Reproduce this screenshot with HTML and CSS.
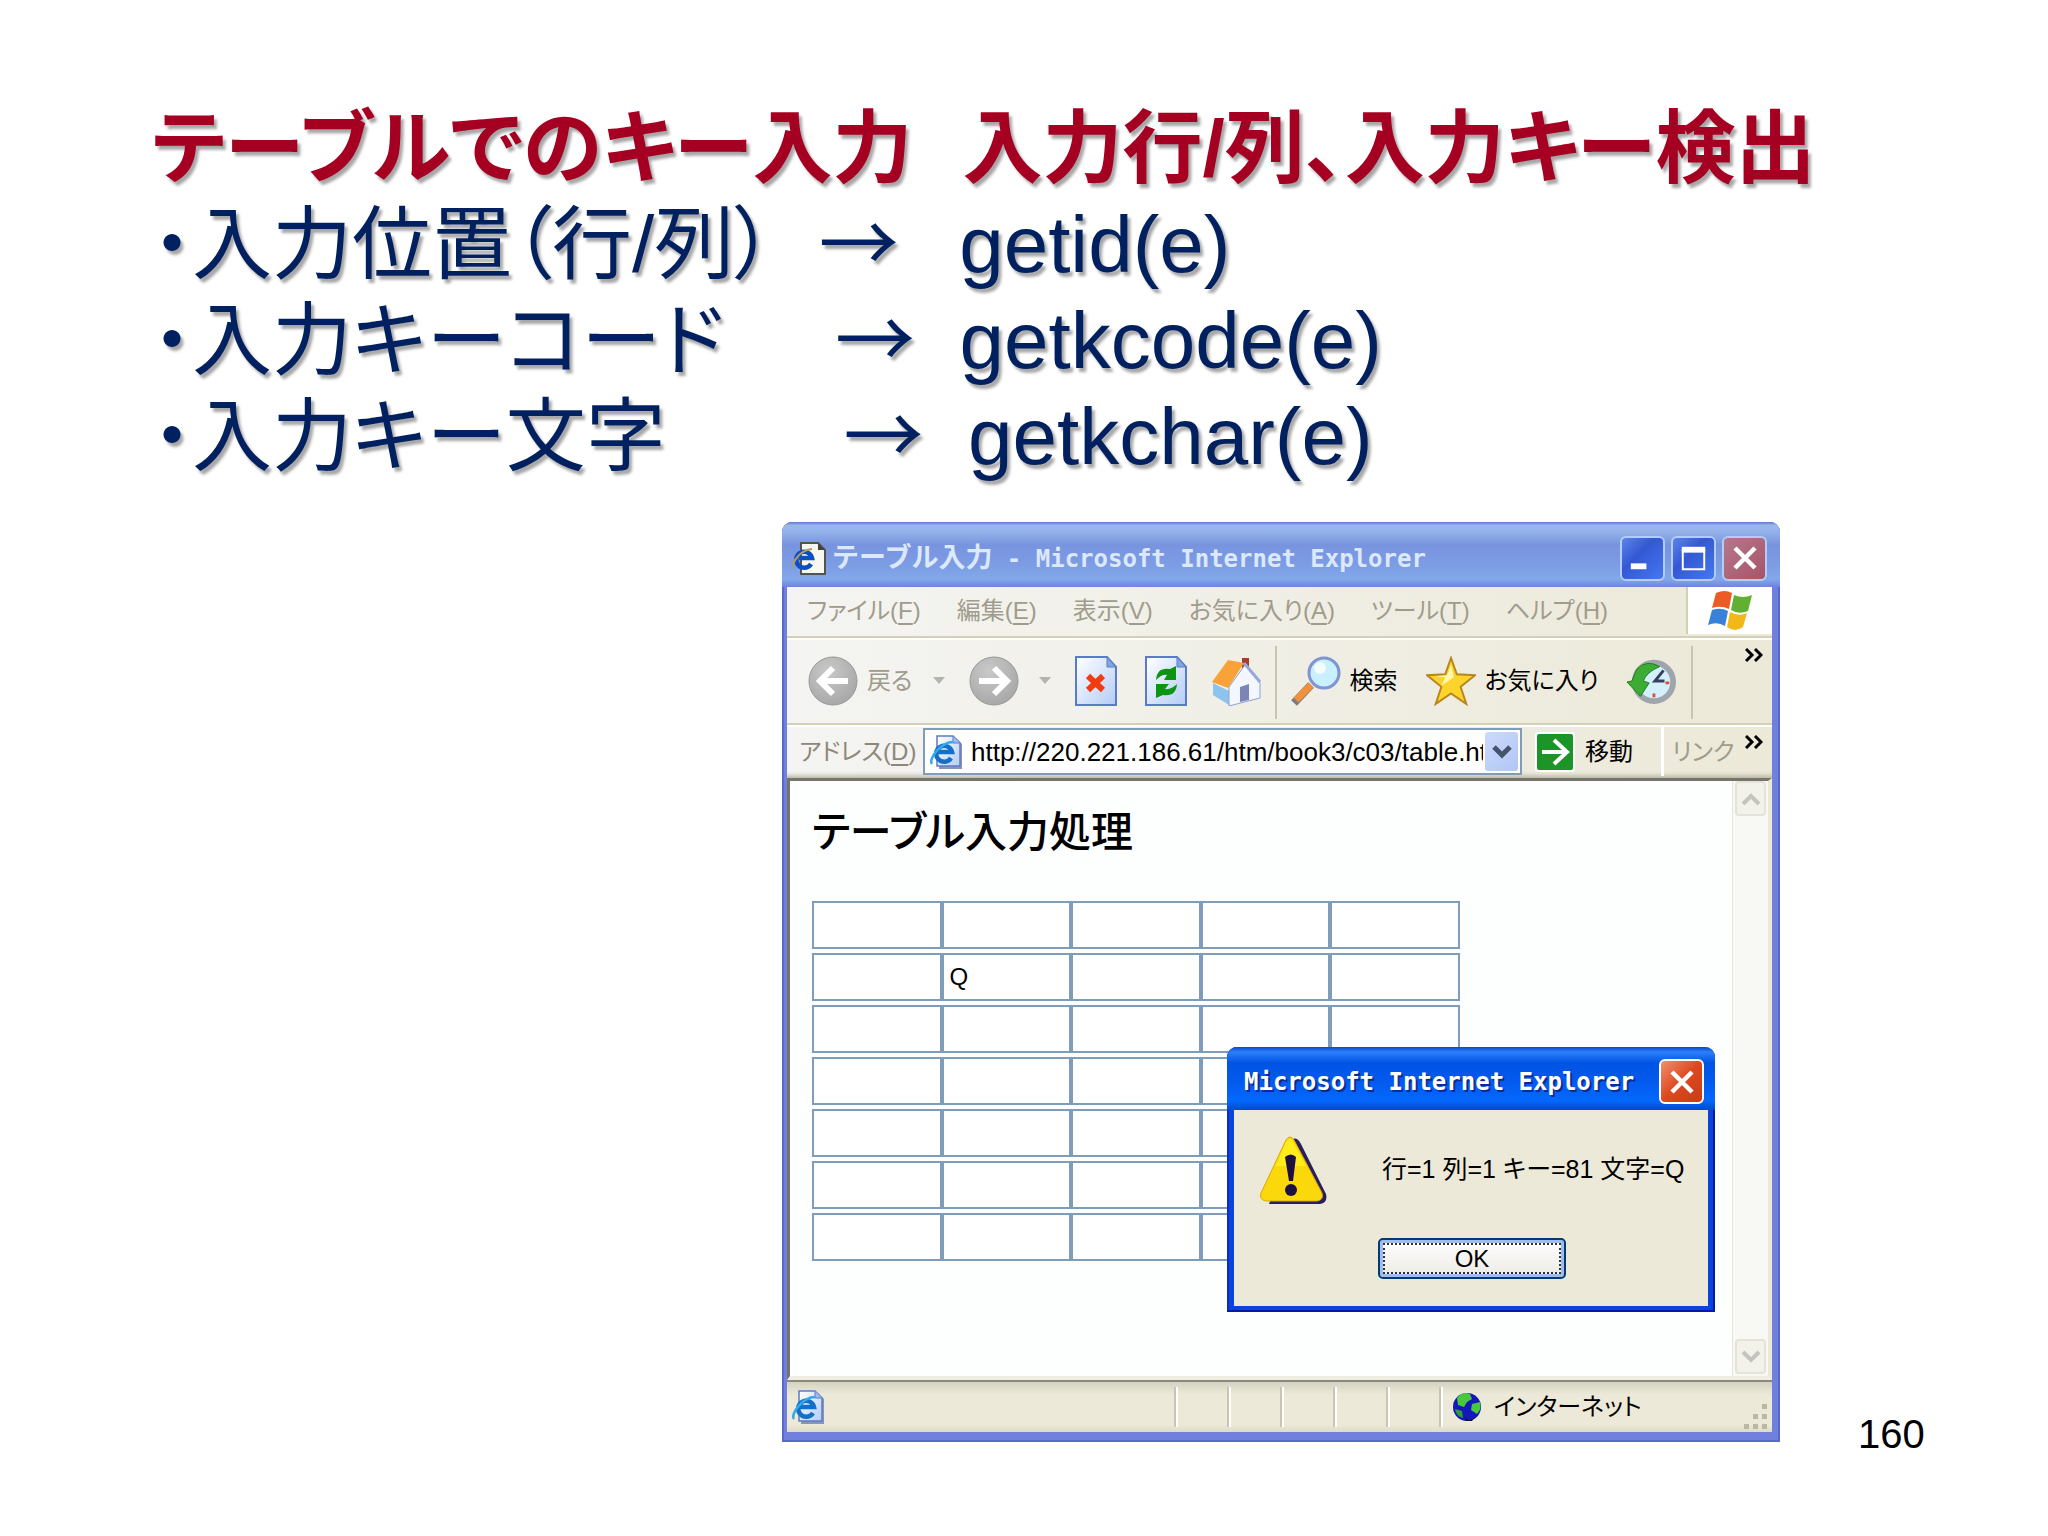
FILE: index.html
```html
<!DOCTYPE html>
<html lang="ja">
<head>
    <meta charset="UTF-8">
    <meta name="viewport" content="width=device-width, initial-scale=1.0">
    <title>テーブルでのキー入力</title>
    <link rel="stylesheet" href="styles.css">
</head>
<body>

    <!-- Shared icons -->
    <svg class="defs" aria-hidden="true">
        <defs>
            <linearGradient id="paper" x1="0" y1="0" x2="1" y2="1">
                <stop offset="0" stop-color="#ffffff"/>
                <stop offset="1" stop-color="#b4ccf6"/>
            </linearGradient>
            <radialGradient id="grey" cx=".4" cy=".3" r=".8">
                <stop offset="0" stop-color="#c9c9c9"/>
                <stop offset="1" stop-color="#a4a4a4"/>
            </radialGradient>
            <symbol id="ie" viewBox="0 0 34 34">
                <path d="M8 1h17l6 6v25H8z" fill="#8a93b8" transform="translate(2 2)"/>
                <path d="M8 1h16l7 7v23H8z" fill="url(#paper)" stroke="#5c7cc4" stroke-width="1.5"/>
                <path d="M24 1v7h7" fill="#9dbcf0" stroke="#5c7cc4"/>
                <path d="M22 23a8 8 0 1 1 1-6H9" fill="none" stroke="#1270c8" stroke-width="4.5"/>
                <path d="M3 29C-1 24 12 7 24 7" fill="none" stroke="#35a8ea" stroke-width="2.5"/>
            </symbol>
            <symbol id="more" viewBox="0 0 18 14">
                <path d="M1 1l6 6-6 6M10 1l6 6-6 6" fill="none" stroke="#000" stroke-width="3"/>
            </symbol>
            <symbol id="cross" viewBox="0 0 26 26">
                <path d="M3 3l20 20M23 3L3 23" stroke="#fff" stroke-width="4.5"/>
            </symbol>
        </defs>
    </svg>

    <main class="slide">
        <header class="text">
            <h1>テーブルでのキー入力<span class="sub">入力行/列、入力キー検出</span></h1>
            <ul>
                <li>・入力位置（行/列）  <span class="arrow">→</span>  &thinsp;getid(e)</li>
                <li>・入力キーコード     <span class="arrow">→</span>  getkcode(e)</li>
                <li>・入力キー文字        <span class="arrow">→</span>  getkchar(e)</li>
            </ul>
        </header>

        <section class="window">
            <div class="titlebar">
                <svg class="ie-icon" viewBox="0 0 34 34">
                    <path d="M9 2h17l7 7v24H9z" fill="#f8f8f0" stroke="#55544c" stroke-width="2"/>
                    <path d="M26 2v7h7z" fill="#44433c"/>
                    <path d="M19 23a8 8 0 1 1 1-6H7" fill="none" stroke="#0b4fc4" stroke-width="4.5"/>
                    <path d="M2 27C-1 22 8 9 20 8" fill="none" stroke="#b89a5c" stroke-width="2"/>
                </svg>
                <span class="caption"><span class="ja">テーブル入力</span> - Microsoft Internet Explorer</span>
                <button class="tb-btn" aria-label="最小化"><svg viewBox="0 0 42 42"><path d="M9 29h16" stroke="#fff" stroke-width="6"/></svg></button>
                <button class="tb-btn" aria-label="最大化"><svg viewBox="0 0 42 42"><path d="M10 12h22v20H10z" fill="none" stroke="#fff" stroke-width="2"/><path d="M9 12h24" stroke="#fff" stroke-width="6"/></svg></button>
                <button class="tb-btn close" aria-label="閉じる"><svg class="x"><use href="#cross"/></svg></button>
            </div>

            <nav class="menubar">
                <button>ファイル(<u>F</u>)</button>
                <button>編集(<u>E</u>)</button>
                <button>表示(<u>V</u>)</button>
                <button>お気に入り(<u>A</u>)</button>
                <button>ツール(<u>T</u>)</button>
                <button>ヘルプ(<u>H</u>)</button>
                <span class="flag">
                    <svg viewBox="0 0 46 42">
                        <path d="M9 3q9-4 16 0l-3 16q-8-4-17-1z" fill="#ec5a26"/>
                        <path d="M27 5q9 4 18 0l-4 16q-9 4-17-1z" fill="#62b032"/>
                        <path d="M5 20q9-3 16 1l-3 15q-8-5-17-1z" fill="#3a82d8"/>
                        <path d="M23 22q9 5 17 1l-4 14q-8 6-16 0z" fill="#f2b818"/>
                    </svg>
                </span>
            </nav>

            <div class="toolbar">
                <button class="tool back off">
                    <svg class="icon" viewBox="0 0 50 50"><circle cx="25" cy="25" r="24" fill="url(#grey)" stroke="#999"/><path d="M40 25H13M25 12L12 25l13 13" fill="none" stroke="#fff" stroke-width="6"/></svg>
                    戻る
                </button>
                <svg class="caret" viewBox="0 0 12 8"><path d="M0 0h12L6 7z" fill="#b4b4ac"/></svg>
                <button class="tool fwd" aria-label="進む">
                    <svg class="icon" viewBox="0 0 50 50"><circle cx="25" cy="25" r="24" fill="url(#grey)" stroke="#999"/><path d="M10 25h27M25 12l13 13-13 13" fill="none" stroke="#fff" stroke-width="6"/></svg>
                </button>
                <svg class="caret" viewBox="0 0 12 8"><path d="M0 0h12L6 7z" fill="#b4b4ac"/></svg>
                <button class="tool doc" aria-label="中止">
                    <svg class="icon" viewBox="0 0 42 50"><path d="M1 1h31l9 10v38H1z" fill="url(#paper)" stroke="#5a7cc8" stroke-width="2"/><path d="M32 1v10h9z" fill="#7ea6e0" stroke="#5a7cc8"/><path d="M13 20l15 14M28 20L13 34" stroke="#f03c10" stroke-width="6"/></svg>
                </button>
                <button class="tool doc" aria-label="更新">
                    <svg class="icon" viewBox="0 0 42 50"><path d="M1 1h31l9 10v38H1z" fill="url(#paper)" stroke="#5a7cc8" stroke-width="2"/><path d="M32 1v10h9z" fill="#7ea6e0" stroke="#5a7cc8"/><path d="M11 24q1-13 14-11l6-3v14H19l3-5q-5-1-11 5z" fill="#0c9412"/><path d="M32 28q-1 13-14 11l-7 3V28h13l-4 5q6 1 12-5z" fill="#0c9412"/></svg>
                </button>
                <button class="tool home" aria-label="ホーム">
                    <svg class="icon" viewBox="0 0 50 50">
                        <path d="M31 2h7v14h-7z" fill="#a83c2c"/>
                        <path d="M2 27l16 8v14L2 39z" fill="#8cc4ee"/>
                        <path d="M18 31L34 9l15 18v15L18 50z" fill="#f4f7ff" stroke="#8ea0d8"/>
                        <path d="M1 26L17 4l16 3-16 25z" fill="#f8a238"/>
                        <path d="M33 7l16 19" stroke="#98a8dc" stroke-width="3"/>
                        <path d="M29 31l9-3v16l-9 2z" fill="#7c86b4"/>
                    </svg>
                </button>
                <span class="sep"></span>
                <button class="tool search">
                    <svg class="icon" viewBox="0 0 50 50"><path d="M3 47l17-18" stroke="#7a7a88" stroke-width="8"/><path d="M5 44l15-15" stroke="#f09038" stroke-width="7"/><circle cx="33" cy="17" r="15" fill="#c8f0ff" stroke="#8094d4" stroke-width="3"/><circle cx="29" cy="12" r="6" fill="#fff" opacity=".8"/></svg>
                    検索
                </button>
                <button class="tool fav">
                    <svg class="icon" viewBox="0 0 52 50"><path d="M26 1l6 17 19 1-15 12 6 18-16-11-16 11 6-18L1 19l19-1z" fill="#fcd42c" stroke="#b8861c" stroke-width="2"/><path d="M26 8l3 13-13 9 4-9-11-1 13-1z" fill="#fff6b0"/></svg>
                    お気に入り
                </button>
                <button class="tool history" aria-label="履歴">
                    <svg class="icon" viewBox="0 0 52 50"><circle cx="28" cy="26" r="20" fill="#d4f0fc" stroke="#a0a4ac" stroke-width="6"/><path d="M44 27h-4M28 42v-4" stroke="#e84c30" stroke-width="3"/><path d="M38 14L29 25h10" fill="none" stroke="#34405c" stroke-width="3"/><path d="M34 10Q20 2 10 13L5 25l-5 1 14 15 9-14-6-2q3-9 17-15z" fill="#3cac34" stroke="#1c7c1c"/></svg>
                </button>
                <span class="sep last"></span>
                <button class="more" aria-label="その他"><svg><use href="#more"/></svg></button>
            </div>

            <form class="addressbar">
                <label for="address">アドレス(<u>D</u>)</label>
                <div class="combo">
                    <svg class="ie-icon"><use href="#ie"/></svg>
                    <input type="text" id="address" value="http://220.221.186.61/htm/book3/c03/table.htm">
                    <button type="button" class="drop" aria-label="履歴を開く"><svg viewBox="0 0 20 14"><path d="M2 2l8 8 8-8" fill="none" stroke="#44546c" stroke-width="5"/></svg></button>
                </div>
                <button type="button" class="go">
                    <svg viewBox="0 0 40 40"><rect width="40" height="40" rx="3" fill="#fff"/><rect x="2" y="2" width="36" height="36" rx="2" fill="#1c9428"/><path d="M7 20h23M19 8l13 12-13 12" fill="none" stroke="#fff" stroke-width="4"/></svg>
                    移動
                </button>
                <span class="links">リンク</span>
                <button type="button" class="more" aria-label="その他のリンク"><svg><use href="#more"/></svg></button>
            </form>

            <div class="view">
                <div class="page">
                    <h2>テーブル入力処理</h2>
                    <table id="grid"></table>
                </div>
                <div class="scroll">
                    <button aria-label="上へ"><svg viewBox="0 0 20 14"><path d="M2 12l8-8 8 8" fill="none" stroke="#c4c4be" stroke-width="4"/></svg></button>
                    <button aria-label="下へ"><svg viewBox="0 0 20 14"><path d="M2 2l8 8 8-8" fill="none" stroke="#c4c4be" stroke-width="4"/></svg></button>
                </div>
            </div>

            <footer class="statusbar">
                <svg class="ie-icon"><use href="#ie"/></svg>
                <span class="pane first"></span>
                <span class="pane"></span>
                <span class="pane"></span>
                <span class="pane"></span>
                <span class="pane"></span>
                <span class="zone">
                    <svg viewBox="0 0 30 30"><circle cx="15" cy="15" r="14" fill="#1418b8"/><path d="M5 6q6-7 13-4l2 5-5 3-3 5-6-2z" fill="#48c83c"/><path d="M20 12l8-2q2 7-3 12l-6-4z" fill="#48c83c"/><path d="M3 17l7 2 1 7q-7-2-8-9z" fill="#2ca030"/><path d="M12 26q6 4 10 0l-2 3h-6z" fill="#101030"/></svg>
                    インターネット
                </span>
                <svg class="grip" viewBox="0 0 24 26"><path d="M18 0h5v5h-5zM18 10h5v5h-5zM18 20h5v5h-5zM9 10h5v5H9zM9 20h5v5H9zM0 20h5v5H0z" fill="#bab7a4"/></svg>
            </footer>

            <!-- Alert over the page -->
            <div class="dialog" role="alertdialog" aria-labelledby="dlgTitle" aria-describedby="dlgText">
                <div class="titlebar">
                    <span class="caption" id="dlgTitle">Microsoft Internet Explorer</span>
                    <button class="tb-btn close" aria-label="閉じる"><svg class="x"><use href="#cross"/></svg></button>
                </div>
                <div class="dialog-body">
                    <svg class="warn" viewBox="0 0 68 68">
                        <path d="M33 3q4-2 8 5l25 50q2 9-6 10H9z" fill="#28205c"/>
                        <path d="M26 4q4-6 8 0l28 53q2 7-5 8H6q-7-1-5-8z" fill="#fbd80c" stroke="#d8a808"/>
                        <path d="M26 6q4-6 7 0l13 24H16z" fill="#fff31c" opacity=".8"/>
                        <path d="M25 21q6-5 11 0l-3 24h-4z" fill="#1c1040"/>
                        <circle cx="31" cy="54" r="6" fill="#1c1040"/>
                    </svg>
                    <p id="dlgText">行=1 列=1 キー=81 文字=Q</p>
                    <button class="ok">OK</button>
                </div>
            </div>
        </section>

        <span class="pageno">160</span>
    </main>

    <script>
        // 7 x 5 table of input cells
        const ROWS = 7;
        const COLS = 5;
        const grid = document.getElementById('grid');

        for (let r = 0; r < ROWS; r++) {
            const row = grid.insertRow();
            for (let c = 0; c < COLS; c++) {
                const input = document.createElement('input');
                input.type = 'text';
                input.setAttribute('aria-label', `行${r} 列${c}`);
                if (r === 1 && c === 1) {
                    input.value = 'Q';
                }
                row.insertCell().appendChild(input);
            }
        }
    </script>

</body>
</html>
```
FILE: styles.css
```css
* {
    box-sizing: border-box;
}
body {
    margin: 0;
    background: #fff;
    font-family: "Liberation Sans", "Noto Sans CJK JP", sans-serif;
    font-feature-settings: "palt";
}
button, input {
    font: inherit;
    font-feature-settings: inherit;
    color: inherit;
    margin: 0;
    padding: 0;
    border: 0;
    background: none;
}
svg {
    display: block;
    flex: none;
}
.defs {
    position: absolute;
    width: 0;
    height: 0;
}

/* Slide */
.slide {
    min-height: 100vh;
    display: grid;
    grid-template-columns: 782fr 998fr 268fr;
    grid-template-rows: auto 1fr;
    padding-bottom: 94px;
    row-gap: 37px;
}
.text {
    grid-column: 1 / -1;
    padding: 101px 0 0 152px;
    font-size: 80px;
    line-height: 96px;
    white-space: nowrap;
    color: #00205f;
    text-shadow: 3px 4px 3px rgba(0, 0, 0, 0.35);
}
.text h1 {
    margin: 0;
    font-size: 80px;
    line-height: 96px;
    color: #a50021;
}
.sub {
    margin-left: 50px;
}
.text ul {
    margin: 0;
    padding: 0;
    list-style: none;
}
.text li {
    height: 96px;
    white-space: pre;
}
.arrow {
    font-family: "Noto Sans CJK JP", sans-serif;
    line-height: 0;
}
.pageno {
    grid-column: 3;
    align-self: end;
    padding-left: 78px;
    margin-bottom: -16px;
    font-size: 40px;
    line-height: 48px;
    color: #000;
}

/* Browser window */
.window {
    grid-column: 2;
    position: relative;
    display: flex;
    flex-direction: column;
    padding: 0 8px 10px 5px;
    border-radius: 10px 10px 0 0;
    background: #7080dc;
    box-shadow: inset 0 0 0 2px #5a68cc;
    font-size: 24px;
    line-height: 32px;
}
.titlebar {
    display: flex;
    align-items: center;
    gap: 6px;
    height: 65px;
    margin: 0 -8px 0 -5px;
    padding: 7px 13px 0 10px;
    border-radius: 10px 10px 0 0;
    background: linear-gradient(#6074d0 0, #9ab6ee 5%, #94b2ea 15%, #7894de 35%, #7c9ce4 65%, #82a8ea 88%, #6f84dc 100%);
    color: #dce8fc;
}
.caption {
    flex: 1;
    font: bold 24px/32px "DejaVu Sans Mono", "Noto Sans CJK JP", monospace;
    white-space: nowrap;
}
.ja {
    font-size: 27px;
}
.ie-icon {
    width: 34px;
    height: 34px;
}
.tb-btn {
    display: flex;
    align-items: center;
    justify-content: center;
    width: 45px;
    height: 45px;
    border: 2px solid #b4ccf8;
    border-radius: 6px;
    background: linear-gradient(135deg, #5c84ea, #3458d4 40%, #4478f0);
}
.tb-btn svg {
    width: 41px;
    height: 41px;
}
.tb-btn .x {
    width: 26px;
    height: 26px;
}
.close {
    background: linear-gradient(135deg, #b4788c, #a85468);
}
.menubar {
    display: flex;
    align-items: center;
    gap: 36px;
    height: 51px;
    padding: 0 0 2px 20px;
    border-bottom: 2px solid #d4d0b8;
    background: linear-gradient(90deg, #f4f4f2, #ece9d8);
    color: #a09c8c;
}
.menubar button {
    white-space: nowrap;
}
u {
    text-underline-offset: 4px;
}
.flag {
    display: flex;
    align-items: center;
    justify-content: center;
    align-self: stretch;
    width: 86px;
    margin-left: auto;
    border-left: 2px solid #d4d0b8;
    background: #fff;
}
.flag svg {
    width: 46px;
    height: 42px;
}
.toolbar {
    display: flex;
    align-items: center;
    height: 87px;
    padding: 0 9px 2px 21px;
    border-top: 2px solid #fff;
    border-bottom: 2px solid #d4d0b8;
    background: linear-gradient(90deg, #f4f4f2, #ece9d8);
    color: #000;
}
.tool {
    display: flex;
    align-items: center;
    gap: 9px;
    white-space: nowrap;
}
.off {
    color: #a09c8c;
}
.icon {
    width: 50px;
    height: 50px;
}
.doc .icon {
    width: 42px;
}
.caret {
    width: 12px;
    height: 8px;
    margin: 0 24px 0 20px;
}
.doc {
    margin-right: 28px;
}
.home {
    margin-left: -4px;
}
.sep {
    align-self: stretch;
    width: 2px;
    margin: 6px 14px 2px;
    background: #c8c5b0;
}
.fav {
    margin-left: 28px;
}
.history {
    margin-left: 28px;
}
.last {
    margin-right: auto;
}
.more {
    align-self: flex-start;
    margin-top: 8px;
}
.more svg {
    width: 18px;
    height: 14px;
}
.addressbar {
    display: flex;
    align-items: center;
    height: 53px;
    padding: 0 9px 2px 12px;
    border-top: 2px solid #fff;
    background: linear-gradient(90deg, #f4f4f2, #ece9d8);
    box-shadow: inset 0 -6px 5px -4px #b0ad9c;
}
.addressbar label {
    width: 124px;
    color: #8c887c;
    white-space: nowrap;
}
.combo {
    flex: 1;
    min-width: 0;
    display: flex;
    align-items: center;
    gap: 8px;
    height: 47px;
    padding: 2px 2px 2px 4px;
    border: 2px solid #7f9db9;
    background: #fff;
}
.combo input {
    flex: 1;
    min-width: 0;
    outline: none;
    font-size: 26px;
    color: #000;
}
.drop {
    display: flex;
    align-items: center;
    justify-content: center;
    width: 33px;
    height: 39px;
    margin-left: -6px;
    border-radius: 3px;
    background: linear-gradient(135deg, #ccdafc, #b0c6f6);
}
.drop svg, .scroll svg {
    width: 20px;
    height: 14px;
}
.go {
    display: flex;
    align-items: center;
    gap: 10px;
    margin: 0 28px 0 13px;
    color: #000;
    white-space: nowrap;
}
.go svg {
    width: 40px;
    height: 40px;
}
.links {
    display: flex;
    align-items: center;
    align-self: stretch;
    width: 84px;
    padding-left: 8px;
    border-left: 3px solid #fff;
    color: #a09c8c;
    white-space: nowrap;
}

/* Page view */
.view {
    flex: 1;
    min-height: 600px;
    display: flex;
    border: 3px solid #77746a;
    border-right: 4px solid #ece9d8;
    border-bottom: 4px solid #f0eee2;
    background: #fdfefe;
}
.page {
    flex: 1;
    padding: 28px 22px;
    color: #000;
}
.page h2 {
    margin: 0 0 40px;
    font-size: 42px;
    line-height: 48px;
    font-weight: 500;
}
#grid {
    width: 648px;
    border-spacing: 0 4px;
}
#grid td {
    padding: 0;
}
#grid input {
    display: block;
    width: 100%;
    height: 48px;
    padding: 0 6px;
    border: 2px solid #7f9db9;
    background: #fff;
}
.scroll {
    display: flex;
    flex-direction: column;
    justify-content: space-between;
    width: 36px;
    padding: 0 2px 2px;
    background: #f8f8f5;
    border-left: 1px solid #e8e6dc;
}
.scroll button {
    display: flex;
    align-items: center;
    justify-content: center;
    height: 35px;
    border: 2px solid #e4e3da;
    border-radius: 4px;
    background: #f2f1ea;
}

/* Status bar */
.statusbar {
    display: flex;
    align-items: center;
    height: 52px;
    padding-left: 4px;
    border-top: 2px solid #8c897c;
    background: linear-gradient(#d4d2c2, #ece9d8 25%, #ece9d8 85%, #dedbc8);
    color: #000;
}
.pane, .zone {
    width: 53px;
    height: 40px;
    border-left: 2px solid #c8c5b2;
    box-shadow: inset 2px 0 0 #fff;
}
.first {
    margin-left: auto;
}
.statusbar .zone {
    display: flex;
    align-items: center;
    gap: 12px;
    width: 305px;
    padding-left: 11px;
}
.zone svg {
    width: 30px;
    height: 30px;
}
.grip {
    align-self: flex-end;
    width: 24px;
    height: 26px;
    margin: 0 4px 2px 0;
}

/* Alert dialog */
.dialog {
    position: absolute;
    right: 65px;
    bottom: 130px;
    width: 488px;
    padding: 0 7px 6px;
    border-radius: 10px 10px 0 0;
    background: #0a44dc;
    box-shadow: inset -2px -2px 0 #001ca0, inset 2px 0 0 #0830c0;
    color: #000;
}
.dialog .titlebar {
    height: 63px;
    margin: 0 -7px;
    padding: 6px 11px 0 17px;
    background: linear-gradient(#0848c8 0, #2c80fc 8%, #0054e4 25%, #0458ec 50%, #0468fc 85%, #0048d0 100%);
    color: #fff;
    text-shadow: 2px 2px 0 #0a2c90;
}
.dialog .tb-btn {
    border-color: #fff;
    background: linear-gradient(135deg, #f09070, #dc4820 50%, #c83c18);
}
.dialog-body {
    display: grid;
    grid-template-columns: 118px 1fr;
    padding: 26px 26px 27px;
    row-gap: 34px;
    background: #ece9d8;
}
.warn {
    width: 68px;
    height: 68px;
}
.dialog-body p {
    margin: 0;
    padding: 17px 0 0 4px;
    font-size: 25px;
    white-space: nowrap;
}
.ok {
    grid-column: 2;
    width: 188px;
    height: 41px;
    border: 2px solid #003c74;
    border-radius: 5px;
    outline: 2px dotted #333;
    outline-offset: -7px;
    background: linear-gradient(#fff, #eceae4);
    box-shadow: inset 0 0 0 3px #a0bcf0;
}
```
